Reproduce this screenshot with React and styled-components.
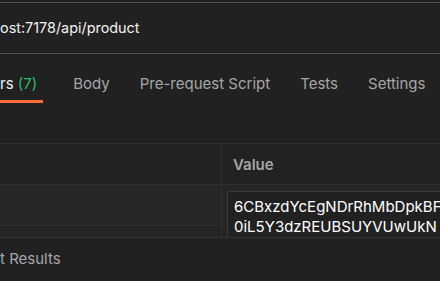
import React from 'react'
import styled, { createGlobalStyle } from 'styled-components'

const GlobalStyle = createGlobalStyle`
  html, body {
    margin: 0;
    padding: 0;
    background: #212121;
    overflow: hidden;
  }
  * {
    box-sizing: border-box;
  }
`

const Wrapper = styled.div`
  width: 440px;
  height: 281px;
  display: flex;
  flex-direction: column;
  background: #212121;
  font-family: Inter, 'Liberation Sans', sans-serif;
  overflow: hidden;
`

const UrlBar = styled.div`
  margin-top: 2px;
  height: 52px;
  border-top: 1px solid #4f4f4f;
  border-bottom: 1px solid #4f4f4f;
  display: flex;
  align-items: center;
  padding-bottom: 1px;
  color: #f2f2f2;
  font-size: 14.4px;
  white-space: nowrap;
`

const TabList = styled.div`
  display: flex;
  align-items: flex-end;
  height: 49px;
  gap: 30px;
  white-space: nowrap;
`

const Tab = styled.div`
  position: relative;
  padding-bottom: 10px;
  padding-right: ${(p) => (p.active ? '6px' : '0')};
  font-size: 15px;
  color: ${(p) => (p.active ? '#f2f2f2' : '#a6a6a6')};

  ${(p) =>
    p.active &&
    `
    &::after {
      content: '';
      position: absolute;
      left: 0;
      right: 0;
      bottom: 0;
      height: 3px;
      background: #ff6c37;
    }
  `}
`

const Count = styled.span`
  color: #2dbb6a;
`

const TableArea = styled.div`
  margin-top: 40px;
  height: 94px;
  overflow: hidden;
  border-top: 1px solid #303030;
`

const Row = styled.div`
  display: grid;
  grid-template-columns: 222px 1fr;
  height: ${(p) => p.h || 41}px;
  border-bottom: 1px solid #303030;
  background: ${(p) => p.bg || '#222222'};
`

const Cell = styled.div`
  border-right: ${(p) => (p.first ? '1px solid #303030' : 'none')};
  display: flex;
  align-items: center;
  padding-left: 11px;
  overflow: visible;
`

const HeadLabel = styled.span`
  color: #a6a6a6;
  font-size: 15px;
  font-weight: 600;
`

const EditCell = styled.div`
  padding: 6px 0 0 5px;
`

const Editor = styled.div`
  position: relative;
  z-index: 1;
  height: 60px;
  width: 230px;
  padding: 5px 0 0 6px;
  background: #212121;
  border: 1px solid #3a3a3a;
  color: #ffffff;
  font-size: 15px;
  line-height: 20px;
  white-space: nowrap;
`

const BottomPanel = styled.div`
  flex: 1;
  border-top: 1px solid #303030;
  display: flex;
  align-items: center;
  padding-bottom: 2px;
  color: #a6a6a6;
  font-size: 15px;
  white-space: nowrap;
`

const App = () => {
  return (
    <Wrapper>
      <GlobalStyle />
      <UrlBar>ost:7178/api/product</UrlBar>
      <TabList>
        <Tab active>
          rs <Count>(7)</Count>
        </Tab>
        <Tab>Body</Tab>
        <Tab>Pre-request Script</Tab>
        <Tab>Tests</Tab>
        <Tab>Settings</Tab>
      </TabList>
      <TableArea>
        <Row>
          <Cell first />
          <Cell>
            <HeadLabel>Value</HeadLabel>
          </Cell>
        </Row>
        <Row bg="#262626">
          <Cell first />
          <EditCell>
            <Editor>
              6CBxzdYcEgNDrRhMbDpkBF
              <br />
              0iL5Y3dzREUBSUYVUwUkN
            </Editor>
          </EditCell>
        </Row>
        <Row bg="#242424">
          <Cell first />
          <Cell />
        </Row>
      </TableArea>
      <BottomPanel>t Results</BottomPanel>
    </Wrapper>
  )
}

export default App
